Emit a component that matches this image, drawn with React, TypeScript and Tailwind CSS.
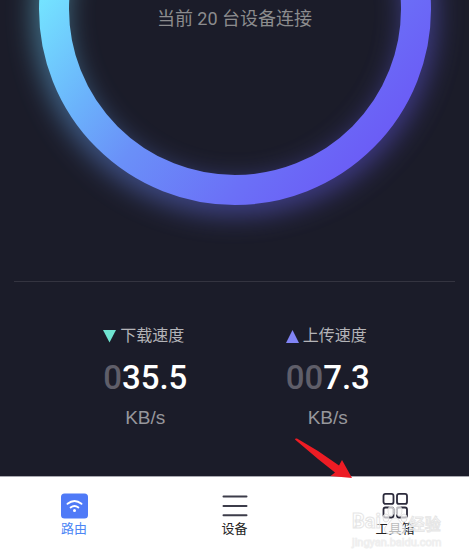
import type { ReactNode } from 'react';

type SpeedProps = {
  label: string;
  icon: ReactNode;
  padding: string;
  value: string;
};

function Ring() {
  return (
    <svg
      viewBox="0 0 470 281"
      className="col-start-1 row-start-1 h-[281px] w-[470px] shrink-0"
      aria-hidden="true"
    >
      <defs>
        <linearGradient id="ring" gradientUnits="userSpaceOnUse" x1="39" y1="0" x2="319" y2="224">
          <stop offset="0" stopColor="#74e4ff" />
          <stop offset="0.27" stopColor="#6bb2fb" />
          <stop offset="0.46" stopColor="#6a90f8" />
          <stop offset="0.76" stopColor="#6b70f7" />
          <stop offset="1" stopColor="#6b5cf6" />
        </linearGradient>
        <filter id="glow" filterUnits="userSpaceOnUse" x="-60" y="-260" width="590" height="540">
          <feGaussianBlur stdDeviation="14" />
        </filter>
      </defs>
      <circle
        cx="235"
        cy="14"
        r="185"
        fill="none"
        stroke="url(#ring)"
        strokeWidth="30"
        opacity="0.5"
        filter="url(#glow)"
      />
      <circle cx="235" cy="9" r="181" fill="none" stroke="url(#ring)" strokeWidth="30" />
    </svg>
  );
}

function Speed({ label, icon, padding, value }: SpeedProps) {
  return (
    <div className="flex flex-col items-center">
      <div>
        <h2 className="flex items-center gap-1 text-base leading-6 text-[#b4b4b8]">
          {icon}
          {label}
        </h2>
        <p className="mt-2.5 text-[33px] leading-10 font-medium text-white">
          <span className="text-[#5f5e69]">{padding}</span>
          {value}
        </p>
        <p className="mt-2 text-center font-['Liberation_Sans',sans-serif] text-[19px] leading-6 text-[#97979c]">
          KB/s
        </p>
      </div>
    </div>
  );
}

function Arrow() {
  return (
    <svg
      viewBox="0 0 59 43"
      className="pointer-events-none absolute right-[62px] bottom-[60px] h-[43px] w-[59px]"
      aria-hidden="true"
    >
      <path
        d="M1 3.500 Q1 2 3 2.500 L24 15 L45 29.500 L48 24 L58 42 L36.500 40 L41 36.500 L24 23 Z"
        fill="#ed1c24"
      />
    </svg>
  );
}

function Watermark() {
  return (
    <div className="pointer-events-none absolute top-3 left-[-23px] w-[92px] text-white/50 select-none">
      <div className="flex h-[30px] items-end leading-5">
        <span className="text-xl font-bold [-webkit-text-stroke:1px_#e6e6e6]">Bai</span>
        <svg viewBox="0 0 28 30" className="h-[30px] w-[28px] shrink-0" aria-hidden="true">
          <g fill="#fafafa" fillOpacity="0.7" stroke="#dcdcdc" strokeOpacity="0.8">
            <ellipse cx="5" cy="13" rx="3" ry="4" />
            <ellipse cx="10" cy="6" rx="3" ry="5" />
            <ellipse cx="18" cy="6" rx="3" ry="5" />
            <ellipse cx="23" cy="13" rx="3" ry="4" />
            <path d="M14 13 C10 13 9 18 5 21 C2 24 4 29 8 29 C11 29 12 28 14 28 C16 28 17 29 20 29 C24 29 26 24 23 21 C19 18 18 13 14 13 Z" />
          </g>
        </svg>
        <span className="text-base leading-5 font-medium whitespace-nowrap [-webkit-text-stroke:1px_#e6e6e6]">
          经验
        </span>
      </div>
      <div className="text-[11px] leading-4 whitespace-nowrap [-webkit-text-stroke:1px_#efefef]">
        jingyan.baidu.com
      </div>
    </div>
  );
}

function RouterIcon() {
  return (
    <svg viewBox="0 0 27 26" className="h-[26px] w-[27px]" aria-hidden="true">
      <rect width="27" height="25" y="0.500" rx="3.500" fill="#4f7af7" />
      <g fill="none" stroke="#fff" strokeWidth="1.900" strokeLinecap="round">
        <path d="M6.500 10.800 Q13.500 5.200 20.500 10.800" />
        <path d="M9.600 14.500 Q13.500 11.400 17.400 14.500" />
      </g>
      <circle cx="13.500" cy="17.600" r="1.500" fill="#fff" />
    </svg>
  );
}

function DevicesIcon() {
  return (
    <svg viewBox="0 0 26 26" className="h-[26px] w-[26px]" aria-hidden="true">
      <path
        d="M1.500 3.500 H24.500 M1.500 13 H24.500 M1.500 22.200 H24.500"
        stroke="#3c3c4a"
        strokeWidth="2"
        strokeLinecap="round"
      />
    </svg>
  );
}

function ToolboxIcon() {
  return (
    <svg viewBox="0 0 26 26" className="h-[26px] w-[26px]" aria-hidden="true">
      <g fill="none" stroke="#2c2b3c" strokeWidth="1.800">
        <rect x="1.500" y="0.900" width="10" height="10" rx="2" />
        <rect x="15" y="0.900" width="10" height="10" rx="2" />
        <rect x="1.500" y="14.500" width="10" height="10" rx="2" />
        <rect x="15" y="14.500" width="10" height="10" rx="2" />
      </g>
    </svg>
  );
}

export default function App() {
  return (
    <div className="flex min-h-screen flex-col overflow-hidden bg-[#1b1c29] font-['Roboto','Noto_Sans_CJK_SC',sans-serif]">
      <main className="flex-1">
        <section className="grid justify-center overflow-hidden">
          <Ring />
          <p className="col-start-1 row-start-1 pt-[5px] text-center text-lg leading-7 text-[#8c8c8e]">
            当前 20 台设备连接
          </p>
        </section>

        <hr className="mx-3.5 border-[#343440]" />

        <section className="grid grid-cols-2 pt-[42px] pr-[50px] pb-11 pl-[54px]">
          <Speed
            label="下载速度"
            padding="0"
            value="35.5"
            icon={
              <svg viewBox="0 0 13 13" className="h-[13px] w-[13px]" aria-hidden="true">
                <path d="M0 0 H13 L6.500 12.500 Z" fill="#6fe3d0" />
              </svg>
            }
          />
          <Speed
            label="上传速度"
            padding="00"
            value="7.3"
            icon={
              <svg viewBox="0 0 13 13" className="h-[13px] w-[13px]" aria-hidden="true">
                <path d="M6.500 0 L13 13 H0 Z" fill="#8184f5" />
              </svg>
            }
          />
        </section>
      </main>

      <nav className="flex justify-between border-t border-[#a9a9b0] bg-white px-[54px] pt-4 pb-[19px] text-[13px] leading-5 text-[#242424]">
        <button type="button" className="flex w-10 flex-col items-center text-[#4c86f5]" aria-current="page">
          <RouterIcon />
          路由
        </button>
        <button type="button" className="flex w-10 flex-col items-center">
          <DevicesIcon />
          设备
        </button>
        <div className="relative">
          <button type="button" className="flex w-10 flex-col items-center whitespace-nowrap">
            <ToolboxIcon />
            工具箱
          </button>
          <Watermark />
          <Arrow />
        </div>
      </nav>
    </div>
  );
}
